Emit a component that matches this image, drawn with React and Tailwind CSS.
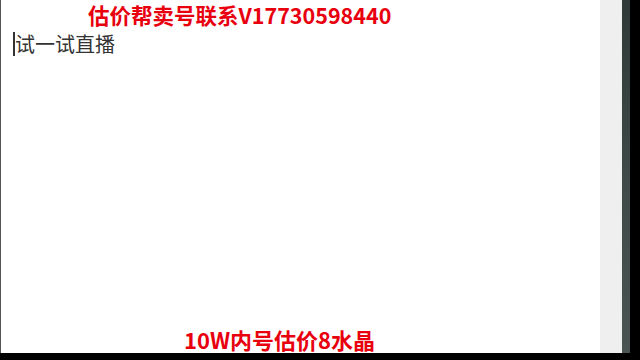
export default function App() {
  const cjk = { fontFamily: '"Noto Sans CJK SC", "Noto Sans", sans-serif' };
  return (
    <div className="flex h-[360px] w-[640px] flex-col overflow-hidden bg-black" style={cjk}>
      <div className="flex h-[353px]">
        <div className="flex flex-1 flex-col border-l border-[#555] bg-white">
          <div className="pl-[87px] pt-[2px] text-[21.5px] font-bold leading-[26px] text-[#e8000e]">
            估价帮卖号联系V17730598440
          </div>
          <div className="flex items-center pl-[12px] pt-[3px]">
            <span className="h-[24px] w-[2px] bg-[#333]"></span>
            <span className="text-[20px] leading-[26px] text-[#333]">试一试直播</span>
          </div>
          <div className="flex-1"></div>
          <div className="pl-[183px] text-[22px] font-bold leading-[28px] text-[#e8000e]">
            10W内号估价8水晶
          </div>
        </div>
        <div className="w-[22px] bg-[#efefef]"></div>
        <div className="w-[8px] bg-gradient-to-b from-[#2e3a38] via-[#3d4a48] to-[#4a5553]"></div>
        <div className="w-[10px] bg-black"></div>
      </div>
      <div className="flex-1 bg-black"></div>
    </div>
  );
}
